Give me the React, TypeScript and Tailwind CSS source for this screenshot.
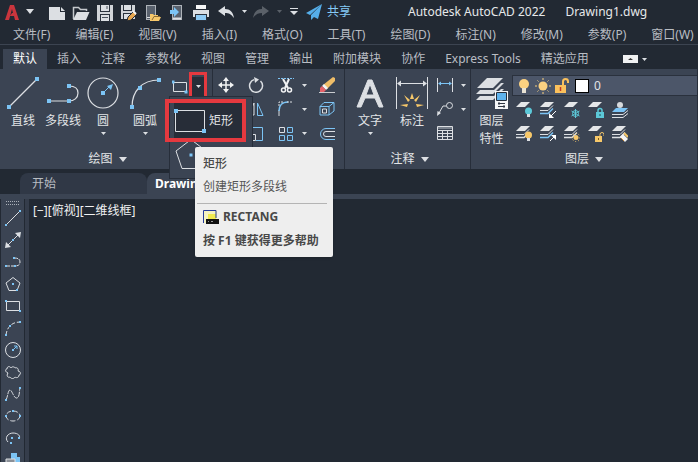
import type { ReactNode } from "react";
import clsx from "clsx";

const BLUE = "#7cc4f5";
const LIGHT = "#dcdfe3";
const YELLOW = "#f7c86a";
const CYAN = "#5cc8d8";

type IconProps = { w?: number; h?: number; children: ReactNode };

const Icon = ({ w = 16, h = 16, children }: IconProps) => (
  <svg
    width={w}
    height={h}
    viewBox={`0 0 ${w} ${h}`}
    fill="none"
    stroke={LIGHT}
    className="block shrink-0"
    aria-hidden="true"
  >
    {children}
  </svg>
);

// Blue grip points that mark the picks of a drawing command
const Grips = ({ at, size = 3 }: { at: number[][]; size?: number }) => (
  <g fill={BLUE} stroke="none">
    {at.map(([x, y]) => (
      <rect
        key={`${x}-${y}`}
        x={x - size / 2}
        y={y - size / 2}
        width={size}
        height={size}
      />
    ))}
  </g>
);

const Caret = ({ big = false }: { big?: boolean }) =>
  big ? (
    <Icon w={8} h={5}>
      <path d="M0 0h8L4 5z" fill={LIGHT} stroke="none" />
    </Icon>
  ) : (
    <Icon w={5} h={3}>
      <path d="M0 0h5L2.500 3z" fill={LIGHT} stroke="none" />
    </Icon>
  );

const quickAccess = [
  {
    name: "新建",
    icon: (
      <Icon w={18} h={18}>
        <path d="M1 4h11v5h5v8H1z" fill={LIGHT} stroke="none" />
        <path d="M13 4l4 4h-4z" fill={LIGHT} stroke="none" />
      </Icon>
    ),
  },
  {
    name: "打开",
    icon: (
      <Icon w={18} h={18}>
        <path d="M1.500 16V4.500h5l2 2h6V8" stroke="#c5c9cd" strokeWidth="1.500" />
        <path d="M1 17L5 9h12.500L14 17z" fill={LIGHT} stroke="none" />
      </Icon>
    ),
  },
  {
    name: "保存",
    icon: (
      <Icon w={18} h={18}>
        <path d="M1 2h16v16H1z" fill="#d2d5d9" stroke="none" />
        <path d="M4 2h10v7H4zM4 11h10v7H4z" fill="#2b323d" stroke="none" />
        <path d="M5 2h8v6H5zM5 12h8v6H5z" fill={LIGHT} stroke="none" />
        <path d="M6 14.500h6M11 3v3" stroke="#4a525e" />
      </Icon>
    ),
  },
  {
    name: "另存为",
    icon: (
      <Icon w={18} h={18}>
        <path d="M1 2h14v14H1z" fill="#d2d5d9" stroke="none" />
        <path d="M3 2h9v6H3zM3 10h9v6H3z" fill="#2b323d" stroke="none" />
        <path d="M4 2h7v5H4zM4 11h7v5H4z" fill={LIGHT} stroke="none" />
        <path d="M7 18l1-4 6-6 3 3-6 6z" fill="#e6a650" stroke="#222933" />
        <path d="M13 8l3 3" stroke="#f4f4f4" strokeWidth="2" />
      </Icon>
    ),
  },
  {
    name: "从移动设备打开",
    icon: (
      <Icon w={18} h={18}>
        <rect x="2.500" y="2.500" width="9" height="14" fill="#59616d" stroke="#aeb3b9" />
        <path d="M3 14.500h8" stroke={LIGHT} />
        <path d="M6 17v-6h3l1 1h4v2h3l-2 4H6z" fill={YELLOW} stroke="none" />
        <path d="M8 17l2-3.500h6" stroke="#8a6a35" />
      </Icon>
    ),
  },
  {
    name: "保存到移动设备",
    icon: (
      <Icon w={18} h={18}>
        <rect x="4.500" y="2.500" width="9" height="14" fill="#59616d" stroke="#aeb3b9" />
        <path d="M5 15.500h8" stroke={LIGHT} strokeWidth="2" />
        <path d="M2 7h4V4l5 5-5 5v-3H2z" fill={BLUE} stroke="none" />
      </Icon>
    ),
  },
  {
    name: "打印",
    icon: (
      <Icon w={18} h={18}>
        <path d="M4 2h10v4H4z" fill="#f5f6f7" stroke="none" />
        <path d="M1 7h16v7H1z" fill={LIGHT} stroke="none" />
        <path d="M3 11h12v7H3z" fill="#2b323d" stroke="none" />
        <path d="M4 12h10v5H4z" fill="#8fcbf5" stroke="none" />
      </Icon>
    ),
  },
];

const menus = [
  "文件(F)",
  "编辑(E)",
  "视图(V)",
  "插入(I)",
  "格式(O)",
  "工具(T)",
  "绘图(D)",
  "标注(N)",
  "修改(M)",
  "参数(P)",
  "窗口(W)",
];

const ribbonTabs = [
  "默认",
  "插入",
  "注释",
  "参数化",
  "视图",
  "管理",
  "输出",
  "附加模块",
  "协作",
  "Express Tools",
  "精选应用",
];

const drawTools = [
  {
    name: "直线",
    icon: (
      <Icon w={32} h={32}>
        <path d="M2 30L30 2" strokeWidth="1.200" />
        <Grips at={[[2, 30], [30, 2]]} size={4} />
      </Icon>
    ),
  },
  {
    name: "多段线",
    icon: (
      <Icon w={32} h={32}>
        <path d="M2 24h20M22 9c5 0 9 2 9 7s-4 8-9 8" strokeWidth="1.200" />
        <Grips at={[[2, 24], [22, 24], [22, 9]]} size={4} />
      </Icon>
    ),
  },
  {
    name: "圆",
    menu: true,
    icon: (
      <Icon w={32} h={32}>
        <circle cx="16" cy="16" r="15" strokeWidth="1.200" />
        <path d="M16 16l6-6" stroke={BLUE} />
        <path d="M26 7l-2 6-4-4z" fill={BLUE} stroke="none" />
        <Grips at={[[16, 16]]} size={4} />
      </Icon>
    ),
  },
  {
    name: "圆弧",
    menu: true,
    icon: (
      <Icon w={32} h={32}>
        <path d="M3 30C3 14 13 3 30 3" strokeWidth="1.200" />
        <Grips at={[[3, 30], [11, 11], [30, 3]]} size={4} />
      </Icon>
    ),
  },
];

const modifyTools = [
  {
    name: "移动",
    icon: (
      <Icon>
        <path d="M8 2v12M2 8h12" stroke="#f2f3f4" strokeWidth="1.500" />
        <path
          d="M8 0l3 4H5zM8 16l3-4H5zM0 8l4-3v6zM16 8l-4-3v6z"
          fill="#f2f3f4"
          stroke="none"
        />
      </Icon>
    ),
  },
  {
    name: "旋转",
    icon: (
      <Icon>
        <path d="M12.500 4A6.500 6.500 0 1 1 6 2.600" strokeWidth="1.500" />
        <path d="M6 0l5 2.500-4 3.500z" fill={LIGHT} stroke="none" />
      </Icon>
    ),
  },
  {
    name: "修剪",
    menu: true,
    icon: (
      <Icon>
        <path d="M0 1.500h16" stroke={BLUE} strokeDasharray="2 1" />
        <path d="M5 2l5 9M11 2l-4 9" stroke="#f2f3f4" strokeWidth="2" />
        <circle cx="5.500" cy="13" r="2" stroke="#f2f3f4" strokeWidth="1.500" />
        <circle cx="11.500" cy="13" r="2" stroke="#f2f3f4" strokeWidth="1.500" />
      </Icon>
    ),
  },
  {
    name: "删除",
    icon: (
      <Icon>
        <path d="M14 0l2 1v3L8 12l-4-4z" fill="#efbd68" stroke="none" />
        <path d="M5 7l4 4-2 2-4-4z" fill="#f2f3f4" stroke="none" />
        <path d="M3 9l4 4-2 2H1v-4z" fill="#e5626a" stroke="none" />
        <path d="M0 15.500h16" stroke="#c9ccd0" />
      </Icon>
    ),
  },
  {
    name: "镜像",
    icon: (
      <Icon>
        <path d="M6 2v12H1z" />
        <path d="M9.500 2v12.500H15z" stroke={BLUE} />
      </Icon>
    ),
  },
  {
    name: "圆角",
    menu: true,
    icon: (
      <Icon>
        <path d="M1 15V9" />
        <path d="M1 10c0-5 3-9 9-9" stroke={BLUE} strokeWidth="1.500" />
        <path d="M9 1h6M1 5V1h4" strokeDasharray="2 1" />
      </Icon>
    ),
  },
  {
    name: "分解",
    icon: (
      <Icon>
        <path d="M1 5.500h9V14H1zM1 5.500L5 1.500h10l-5 4" stroke={BLUE} />
        <path d="M15 1.500V10l-5 4" stroke={BLUE} />
        <path d="M3.500 8h4v4h-4z" />
      </Icon>
    ),
  },
  {
    name: "缩放",
    icon: (
      <Icon>
        <path d="M3 1.500h11.500v13H8" stroke={BLUE} />
        <path d="M1.500 8.500h6v6h-6z" />
      </Icon>
    ),
  },
  {
    name: "阵列",
    menu: true,
    icon: (
      <Icon>
        <path d="M1.500 1.500h5v5h-5z" />
        <path d="M9.500 1.500h5v5h-5zM1.500 9.500h5v5h-5zM9.500 9.500h5v5h-5z" stroke={BLUE} />
      </Icon>
    ),
  },
  {
    name: "偏移",
    icon: (
      <Icon>
        <path d="M16 2.500H7a5.500 5.500 0 0 0 0 11h9" stroke={BLUE} />
        <path d="M16 5.500H7a2.500 2.500 0 0 0 0 5h9" />
      </Icon>
    ),
  },
];

const dimensionTools = [
  {
    name: "线性",
    menu: true,
    icon: (
      <Icon>
        <path d="M.5 1v14M15.500 1v14" />
        <path d="M2 6.500h12" stroke={BLUE} />
        <path d="M1 6.500l3-2v4zM15 6.500l-3-2v4z" fill={BLUE} stroke="none" />
      </Icon>
    ),
  },
  {
    name: "引线",
    menu: true,
    icon: (
      <Icon>
        <circle cx="12.500" cy="4.500" r="3" />
        <path d="M9.500 5H6l-4 7" />
        <path d="M0 15l.5-5L4 12z" fill={LIGHT} stroke="none" />
      </Icon>
    ),
  },
  {
    name: "表格",
    icon: (
      <Icon>
        <path d="M.5 1.500h15v13H.5zM.5 5.500h15M.5 8.500h15M.5 11.500h15M5.500 5v9M10.500 5v9" />
        <path d="M1 2h14v2H1z" fill="#7b838e" stroke="none" />
      </Icon>
    ),
  },
];

const Sheet = ({ y, color = "#e4e6e8" }: { y: number; color?: string }) => (
  <path d={`M0 ${y + 5}L5 ${y}h9l-5 5z`} fill={color} stroke="none" />
);

const Stack = ({ tint = LIGHT }: { tint?: string }) => (
  <g>
    <Sheet y={0} />
    <path d="M0 8.500h8l5-5" />
    <path d="M0 11.500h8l5-5" stroke={tint} strokeWidth="1.500" />
  </g>
);

const Bulb = ({ color }: { color: string }) => (
  <g stroke="none">
    <circle cx="12.500" cy="9" r="3.500" fill={color} />
    <path d="M11 12h3v3h-3z" fill={LIGHT} />
  </g>
);

const layerTools = [
  {
    name: "关闭图层",
    icon: (
      <>
        <Sheet y={0} />
        <Bulb color={CYAN} />
      </>
    ),
  },
  {
    name: "隔离图层",
    icon: (
      <>
        <Stack tint={BLUE} />
        <path d="M16 9l-5 5" stroke="#ffffff" />
        <path d="M9 16v-5l5 5z" fill="#ffffff" stroke="none" />
      </>
    ),
  },
  {
    name: "冻结图层",
    icon: (
      <>
        <Sheet y={0} />
        <path
          d="M11.500 7v9M7.500 9l8 5M15.500 9l-8 5"
          stroke={CYAN}
        />
        <circle cx="11.500" cy="11.500" r="3" stroke={CYAN} />
      </>
    ),
  },
  {
    name: "锁定图层",
    icon: (
      <>
        <Sheet y={0} />
        <path d="M10 10V8.500a2 2 0 0 1 4 0V10" stroke={CYAN} strokeWidth="1.500" />
        <path d="M8 10h8v6H8z" fill={CYAN} stroke="none" />
        <path d="M12 12v2" stroke="#20505a" />
      </>
    ),
  },
  {
    name: "置为当前",
    icon: (
      <>
        <path d="M0 10l4-4h12l-4 4z" fill={BLUE} stroke="none" />
        <path d="M0 12.500h11l5-4M0 15.500h11l5-4" />
        <circle cx="8" cy="3" r="3" fill="#d7dadd" stroke="none" />
      </>
    ),
  },
  {
    name: "打开所有图层",
    icon: (
      <>
        <Stack />
        <Bulb color={YELLOW} />
      </>
    ),
  },
  {
    name: "取消隔离",
    icon: (
      <>
        <Stack tint={BLUE} />
        <path d="M10 15l4-4" stroke="#ffffff" />
        <path d="M16 9v5l-5-5z" fill="#ffffff" stroke="none" />
      </>
    ),
  },
  {
    name: "解冻图层",
    icon: (
      <>
        <Stack />
        <circle cx="12" cy="11.500" r="2.500" fill={YELLOW} stroke="none" />
        <circle cx="12" cy="11.500" r="4" stroke={YELLOW} strokeDasharray="1 2" />
      </>
    ),
  },
  {
    name: "解锁图层",
    icon: (
      <>
        <Sheet y={0} />
        <path d="M12 11V8.500a2 2 0 0 1 4 0V10" stroke={YELLOW} />
        <path d="M7 10h7v6H7z" fill={YELLOW} stroke="none" />
        <path d="M10.500 12v2" stroke="#7b5a1e" />
      </>
    ),
  },
  {
    name: "匹配图层",
    icon: (
      <>
        <Stack />
        <path d="M8 11l3-3 5 5-3 3z" fill="#f4f4f4" stroke="none" />
        <path d="M12 7l4 4" stroke={YELLOW} strokeWidth="2" />
        <path d="M9 12l3 3" stroke="#c98b3c" />
      </>
    ),
  },
];

const sideTools = [
  {
    name: "直线",
    icon: (
      <>
        <path d="M1 15L15 1" />
        <Grips at={[[1, 15], [15, 1]]} size={2} />
      </>
    ),
  },
  {
    name: "构造线",
    icon: (
      <>
        <path d="M2 14L14 2" />
        <path d="M0 16l1-6 5 5zM16 0l-1 6-5-5z" fill={LIGHT} stroke="none" />
        <Grips at={[[8, 8]]} size={2} />
      </>
    ),
  },
  {
    name: "多段线",
    icon: (
      <>
        <path d="M1 12h9M9 4c4 0 6 1 6 4s-2 4-5 4" strokeDasharray="4 1" />
        <Grips at={[[1, 12], [10, 12], [9, 4]]} size={2} />
      </>
    ),
  },
  {
    name: "多边形",
    icon: (
      <>
        <path d="M8 1.500L15 7l-3 7.500H4L1 7z" />
        <Grips at={[[8, 8], [12, 14]]} size={2} />
      </>
    ),
  },
  {
    name: "矩形",
    icon: (
      <>
        <path d="M1.500 3.500h13v9h-13z" />
        <Grips at={[[1, 3], [15, 13]]} size={2} />
      </>
    ),
  },
  {
    name: "圆弧",
    icon: (
      <>
        <path d="M1 15C2 7 7 2 15 2" strokeDasharray="4 2" />
        <Grips at={[[1, 15], [5, 6], [15, 2]]} size={2} />
      </>
    ),
  },
  {
    name: "圆",
    icon: (
      <>
        <circle cx="8" cy="8" r="7.500" />
        <path d="M8 8l4-4M9 4h3v3" stroke={BLUE} />
        <Grips at={[[8, 8]]} size={2} />
      </>
    ),
  },
  {
    name: "修订云线",
    icon: (
      <path d="M3 9C0 8 0 5 2 5c0-3 3-3 4-1 1-2 4-1 4 0 2-1 4 1 3 3 3 0 3 4 1 4 0 3-3 3-4 2-1 2-4 2-5 0-2 1-4-1-2-4z" />
    ),
  },
  {
    name: "样条曲线",
    icon: (
      <>
        <path d="M1 14C3 10 3 4 5 4s4 9 7 8 2-7 3-10" strokeDasharray="5 1" />
        <Grips at={[[1, 14], [15, 2]]} size={2} />
      </>
    ),
  },
  {
    name: "椭圆",
    icon: (
      <>
        <ellipse cx="8" cy="8" rx="7" ry="5" strokeDasharray="5 2" />
        <Grips at={[[1, 8], [15, 8], [8, 3]]} size={2} />
      </>
    ),
  },
  {
    name: "椭圆弧",
    icon: (
      <>
        <path d="M3 12C-1 8 3 3 8 3s8 3 6 6" />
        <Grips at={[[6, 13], [7, 8], [14, 8]]} size={2} />
      </>
    ),
  },
  {
    name: "插入块",
    icon: (
      <>
        <path d="M6 1h6v4h3v6H9V7H6z" fill={BLUE} stroke="none" />
        <path d="M1 7h9v9H1z" fill="#8b9097" />
      </>
    ),
  },
];

type PanelProps = {
  title: string;
  className?: string;
  children: ReactNode;
};

const Panel = ({ title, className, children }: PanelProps) => (
  <section
    className={clsx(
      "flex shrink-0 flex-col border-r border-[#272e3a] bg-[#3b4453]",
      className,
    )}
  >
    <div className="flex h-20 pt-1">{children}</div>
    <button className="flex h-5 items-center justify-center gap-[6px]">
      {title}
      <Caret big />
    </button>
  </section>
);

type BigButtonProps = {
  label: string;
  menu?: boolean;
  icon: ReactNode;
  className?: string;
};

const BigButton = ({ label, menu, icon, className }: BigButtonProps) => (
  <button
    className={clsx("flex flex-col items-center whitespace-pre pt-1", className)}
  >
    {icon}
    <span className="pt-[3px] pb-[2px] leading-[18px]">{label}</span>
    {menu && <Caret />}
  </button>
);

const Tooltip = () => (
  <div
    role="tooltip"
    className="absolute top-[78px] left-[195px] z-30 w-[138px] rounded-xs bg-[#eeeeee] px-2 py-2 text-[#484848] shadow"
  >
    <p className="pt-px font-medium leading-4">矩形</p>
    <p className="pt-[7px] leading-4 text-[#555555]">创建矩形多段线</p>
    <hr className="-ml-[6px] -mr-[2px] mt-2 border-[#b4b4b4]" />
    <div className="flex items-center gap-1 pt-[5px] font-bold leading-4">
      <Icon>
        <path d="M0 1h14v13H0z" fill="#f4f2c0" stroke="none" />
        <path d="M5 5h8v5H5z" fill="#f0ea50" stroke="none" />
        <path d="M.5 14V1.500H13V9" stroke="#243a9c" />
        <path d="M3 10h13v5H3z" fill="#111111" stroke="none" />
        <path d="M5 12.500h1M8 12.500h2" stroke="#9a9a9a" />
      </Icon>
      RECTANG
    </div>
    <p className="whitespace-nowrap pt-2 font-bold leading-4">
      按 F1 键获得更多帮助
    </p>
  </div>
);

// Flyout of the rectangle split button
const ShapeMenu = () => (
  <div className="absolute top-[27px] left-[169px] z-20 w-[84px] border border-[#272e3a] bg-[#3b4453] px-1 pt-[6px]">
    <button className="relative flex h-[35px] w-[70px] items-center gap-[3px] bg-[#272d38]">
      <Icon w={32} h={25}>
        <path d="M1.500 2.500h29v21h-29z" />
        <Grips at={[[2, 3], [30, 23]]} size={4} />
      </Icon>
      矩形
      <span className="absolute -inset-x-[9px] -top-1 -bottom-1 border-4 border-[#e5393f] sm:-right-[2px]" />
    </button>
    <button aria-label="多边形" className="block h-10 pb-2">
      <Icon w={34} h={34}>
        <path d="M17 1.500L32 13l-6 17.500H8L2 13z" />
        <Grips at={[[17, 17]]} size={3} />
      </Icon>
    </button>
  </div>
);

const Ribbon = () => (
  <div className="relative flex h-[100px] shrink-0 bg-[#3b4453] text-[#e2e4e7]">
    <Panel title="绘图" className="w-[213px] pl-[3px]">
      {drawTools.map((tool) => (
        <BigButton
          key={tool.name}
          label={tool.name}
          menu={tool.menu}
          icon={tool.icon}
          className={tool.name === "圆弧" ? "w-11" : "w-10"}
        />
      ))}
      <div className="flex h-[23px] items-center pt-1">
        <button aria-label="矩形" className="pr-1 pl-[5px]">
          <Icon w={16} h={14}>
            <path d="M1.500 2.500h13v9h-13z" />
            <Grips at={[[1, 2], [14, 12]]} />
          </Icon>
        </button>
        <button
          aria-label="更多形状"
          className="relative flex h-5 w-3 items-center justify-center bg-[#272d38]"
        >
          <Caret />
          <span className="absolute -inset-x-[3px] -top-[5px] -bottom-[2px] border-3 border-[#e5393f]" />
        </button>
      </div>
    </Panel>

    <Panel title="修改" className="w-[132px]">
      <div className="grid h-[73px] w-full grid-cols-[35px_30px_41px_26px]">
        {modifyTools.map((tool, i) => (
          <button
            key={tool.name}
            aria-label={tool.name}
            className={clsx(
              "flex items-center gap-2",
              i === 0 && "pl-[5px]",
              // the first column of the lower rows lies under the flyout
              i > 3 && i % 3 === 1 && "col-start-2",
            )}
          >
            {tool.icon}
            {tool.menu && <Caret />}
          </button>
        ))}
      </div>
    </Panel>

    <Panel title="注释" className="w-[126px] pl-1">
      <BigButton
        label="文字"
        menu
        className="w-[42px]"
        icon={
          <Icon w={32} h={32}>
            <path
              d="M3 30L14 3h4l11 27h-4l-4-9H11l-4 9zM12 18h8L16 7z"
              fill={LIGHT}
              fillRule="evenodd"
              stroke={LIGHT}
            />
          </Icon>
        }
      />
      <BigButton
        label="标注"
        className="w-[42px]"
        icon={
          <Icon w={32} h={32}>
            <path d="M.5 0v32M31.500 0v32M2 6.500h28" />
            <path d="M1 6.500l4-3v6zM31 6.500l-4-3v6z" fill={LIGHT} stroke="none" />
            <path
              d="M16 16l-2 6h4zM8 18l4 7 2-2zM24 18l-4 7-2-2zM4 28l8-1-1 3zM28 28l-8-1 1 3z"
              fill={YELLOW}
              stroke="none"
            />
          </Icon>
        }
      />
      <div className="flex flex-col pl-1">
        {dimensionTools.map((tool) => (
          <button
            key={tool.name}
            aria-label={tool.name}
            className="flex h-6 items-center gap-2"
          >
            {tool.icon}
            {tool.menu && <Caret />}
          </button>
        ))}
      </div>
    </Panel>

    <Panel title="图层" className="grow">
      <BigButton
        label={"图层\n特性"}
        className="w-[41px] text-center"
        icon={
          <Icon w={32} h={32}>
            <g stroke="none" fill={LIGHT}>
              <path d="M1 11L11 1h16L17 11z" />
              <path d="M0 17l4-4h14l7-7h3L17 17z" />
              <path d="M0 23l4-4h14l7-7h3L17 23z" />
              <path d="M19 14h13v18H19z" fill="#f6f7f8" />
              <path d="M21 16h9v7h-9z" fill="#5fb4ee" />
            </g>
            <path d="M20.500 15.500h10v8h-10z" stroke="#26303d" />
            <path d="M22 26.500h7M22 29.500h7M23 25v3M28 28v3" stroke="#303844" />
          </Icon>
        }
      />
      <div className="min-w-0 grow pt-[2px]">
        <div className="flex h-[21px] items-center gap-[3px] border border-r-0 border-[#2a313d] bg-[#4c5669] pl-[3px]">
          <Icon>
            <circle cx="8" cy="6" r="5" fill="#fbd181" stroke="none" />
            <path d="M6 10h4v5H6z" fill="#e9e3d4" stroke="none" />
          </Icon>
          <Icon>
            <circle cx="8" cy="8" r="4.500" fill="#fbd181" stroke="none" />
            <path
              d="M8 0v2M8 14v2M0 8h2M14 8h2M2.500 2.500l1 1M12.500 12.500l1 1M2.500 13.500l1-1M12.500 3.500l1-1"
              stroke="#fbd181"
            />
          </Icon>
          <Icon>
            <path d="M9 7V3.500a2.500 2.500 0 0 1 5 0V5" stroke="#fbc15c" strokeWidth="2" />
            <path d="M1 7h11v8H1z" fill="#fbc15c" stroke="none" />
            <path d="M6.500 9v4" stroke="#c03a28" strokeWidth="1.500" />
          </Icon>
          <span className="ml-[2px] size-[14px] border border-black bg-white" />
          <select
            aria-label="当前图层"
            className="grow appearance-none bg-transparent pl-[2px] outline-none"
          >
            <option>0</option>
          </select>
        </div>
        <div className="grid w-[120px] grid-cols-5 pt-[2px]">
          {layerTools.map((tool) => (
            <button
              key={tool.name}
              aria-label={tool.name}
              className="flex h-6 items-center justify-center"
            >
              <Icon>{tool.icon}</Icon>
            </button>
          ))}
        </div>
      </div>
    </Panel>

    <ShapeMenu />
    <Tooltip />
  </div>
);

const TitleBar = () => (
  <header className="flex h-[23px] shrink-0 items-center text-[#e6e8ea]">
    <button aria-label="应用程序菜单" className="flex items-center gap-[7px] pl-[5px]">
      <Icon w={14} h={16}>
        <path
          d="M0 16L5 1h4l5 15h-4l-1-4H5l2-3h1L7 5 4 16z"
          fill="#c9353d"
          stroke="none"
        />
      </Icon>
      <Caret big />
    </button>
    <div className="flex gap-[6px] pl-[14px]">
      {quickAccess.map((item) => (
        <button key={item.name} aria-label={item.name}>
          {item.icon}
        </button>
      ))}
    </div>
    <button aria-label="放弃" className="flex items-center gap-2 pl-2">
      <Icon w={16} h={14}>
        <path d="M0 6l7-5v3c5 0 8 3 9 9-3-4-5-5-9-5v3z" fill={LIGHT} stroke="none" />
      </Icon>
      <Caret />
    </button>
    <button
      aria-label="重做"
      className="flex items-center gap-2 pl-[6px] opacity-30"
    >
      <Icon w={16} h={14}>
        <path d="M16 6L9 1v3C4 4 1 7 0 13c3-4 5-5 9-5v3z" fill={LIGHT} stroke="none" />
      </Icon>
      <Caret />
    </button>
    <button aria-label="自定义" className="pl-2">
      <Icon w={8} h={8}>
        <path d="M0 .5h8" />
        <path d="M0 3h8L4 7z" fill={LIGHT} stroke="none" />
      </Icon>
    </button>
    <button className="flex items-center gap-[5px] pl-2 text-[#85cbf7]">
      <Icon>
        <path d="M16 0L0 9l4 2zM16 0L5 11v5l3-3 4 2z" fill="#55aeea" stroke="none" />
      </Icon>
      共享
    </button>
    <h1 className="flex gap-5 whitespace-nowrap pl-[57px]">
      <span>Autodesk AutoCAD 2022</span>
      <span>Drawing1.dwg</span>
    </h1>
  </header>
);

const FileTabs = () => (
  <div className="flex h-[30px] shrink-0 items-end overflow-hidden border-b-5 border-[#3b4453] pt-1 pl-5">
    <button className="h-[21px] w-[127px] rounded-t-lg bg-[#303846] pl-3 text-left text-[#b9bdc3]">
      开始
    </button>
    <button className="h-[21px] w-[110px] rounded-t-lg bg-[#3b4453] pl-2 text-left font-bold text-white">
      Drawing1
    </button>
  </div>
);

const App = () => {
  return (
    <div className="flex h-screen flex-col overflow-hidden bg-[#222933] font-['Noto_Sans','Noto_Sans_CJK_SC',sans-serif] text-xs">
      <TitleBar />
      <nav className="flex h-[22px] shrink-0 items-end gap-[25px] overflow-hidden whitespace-nowrap border-b border-[#3c4451] pb-px pl-[13px] text-[#b9bdc3]">
        {menus.map((menu) => (
          <button key={menu}>{menu}</button>
        ))}
      </nav>
      <nav className="flex h-6 shrink-0 items-end whitespace-nowrap pl-[3px] text-[#b9bdc3]">
        {ribbonTabs.map((tab, i) => (
          <button
            key={tab}
            className={clsx("h-5 px-[10px]", i === 0 && "bg-[#3b4453] text-white")}
          >
            {tab}
          </button>
        ))}
        <button aria-label="最小化功能区" className="flex h-5 items-center gap-1 pl-6">
          <Icon w={15} h={8}>
            <path d="M0 0h15v8H0z" fill="#f0f1f2" stroke="none" />
            <path d="M5 5h5L7.500 3z" fill="#333333" stroke="none" />
          </Icon>
          <Caret />
        </button>
      </nav>
      <Ribbon />
      <FileTabs />
      <main className="flex min-h-0 grow">
        <aside className="flex w-[29px] shrink-0 overflow-hidden border-r-4 border-[#353d4b]">
          <div className="ml-px flex w-[23px] flex-col items-center bg-[#3b4453]">
            <Icon w={14} h={8}>
              <path
                d="M0 2.500h14M0 5.500h14"
                stroke="#aab0b8"
                strokeDasharray="1 1"
              />
            </Icon>
            {sideTools.map((tool) => (
              <button
                key={tool.name}
                aria-label={tool.name}
                className="flex h-[22px] shrink-0 items-center"
              >
                <Icon>{tool.icon}</Icon>
              </button>
            ))}
          </div>
        </aside>
        <p className="pt-1 pl-1 text-[#f0f1f2]">[−][俯视][二维线框]</p>
      </main>
    </div>
  );
};

export default App;
